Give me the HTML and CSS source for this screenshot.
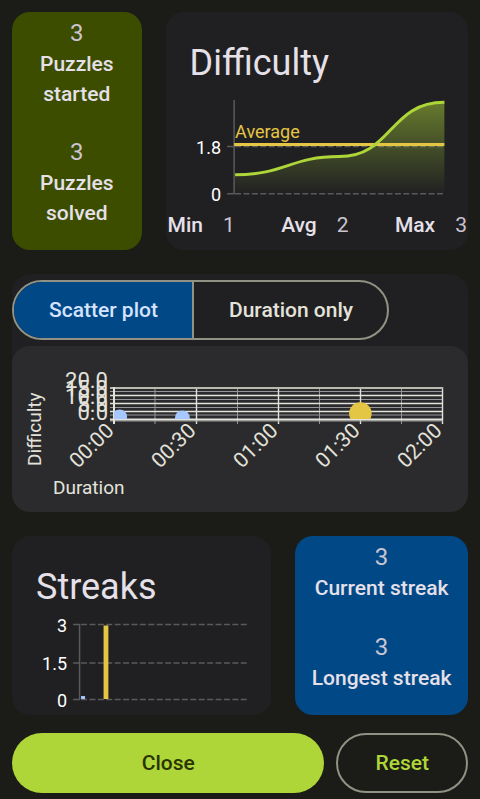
FILE: index.html
```html
<!DOCTYPE html>
<html lang="en">
<head>
<meta charset="utf-8">
<meta name="viewport" content="width=device-width, initial-scale=1">
<title>Statistics</title>
<link rel="stylesheet" href="styles.css">
</head>
<body>
<main class="page">
  <section class="row row-difficulty">
    <div class="tile tile-green">
      <div class="stat"><span class="value">3</span><span class="label">Puzzles started</span></div>
      <div class="stat"><span class="value">3</span><span class="label">Puzzles solved</span></div>
    </div>
    <div class="card">
      <h2 class="title">Difficulty</h2>
      <svg class="chart axis-text" viewBox="0 2 302 118" role="img" aria-label="Difficulty over time">
        <defs>
          <linearGradient id="area" x1="0" y1="14" x2="0" y2="106" gradientUnits="userSpaceOnUse">
            <stop offset="0" stop-color="#aed639" stop-opacity=".5"/>
            <stop offset="1" stop-color="#aed639" stop-opacity="0"/>
          </linearGradient>
        </defs>
        <path class="grid" d="M61 58.500H68M61 105.500H68M68 12V106"/>
        <path class="grid dashed" d="M69 58.500H278M69 105.500H278"/>
        <path fill="url(#area)" d="M69 86.600C119 86.600 124 68.500 173 68.500C226 68.500 223 14.300 278 14.300V106H69Z"/>
        <path class="average" d="M68 56.500H278"/>
        <path class="curve" d="M69 86.600C119 86.600 124 68.500 173 68.500C226 68.500 223 14.300 278 14.300"/>
        <text class="average-text" x="69" y="50">Average</text>
        <text x="55" y="66" text-anchor="end">1.8</text>
        <text x="55" y="113" text-anchor="end">0</text>
      </svg>
      <dl class="summary">
        <div><dt>Min</dt><dd>1</dd></div>
        <div><dt>Avg</dt><dd>2</dd></div>
        <div><dt>Max</dt><dd>3</dd></div>
      </dl>
    </div>
  </section>

  <section class="card plot-card">
    <div class="segments">
      <button type="button" class="segment selected" aria-pressed="true">Scatter plot</button>
      <button type="button" class="segment" aria-pressed="false">Duration only</button>
    </div>
    <div class="plot">
      <svg class="chart scatter" viewBox="0 0 456 166" role="img" aria-label="Scatter plot of difficulty and duration">
        <defs><clipPath id="plot-area"><path d="M102 20H434V73H102Z"/></clipPath></defs>
        <path class="minor" d="M98 45.500H431M98 53.500H431M98 61.500H431M98 69H431M143 41V78M225.500 41V78M307.500 41V78M389.500 41V78"/>
        <path class="major" d="M98 49.500H431M98 57.500H431M98 65.500H431M184.500 41V78M266.500 41V78M348.500 41V78M430.500 41V78"/>
        <path class="border-top" d="M98 42H431"/>
        <path class="minor" d="M98 75H431"/>
        <path class="axis" d="M98 73.500H431M102 41V78"/>
        <g clip-path="url(#plot-area)">
          <circle class="dot" cx="107.700" cy="70.800" r="7.400"/>
          <circle class="dot" cx="170.400" cy="71.800" r="7.400"/>
          <circle class="dot-best" cx="348.400" cy="67.600" r="11.300"/>
        </g>
        <g class="y-ticks" text-anchor="end">
          <text x="96" y="42">20.0</text>
          <text x="96" y="50">15.0</text>
          <text x="96" y="58">10.0</text>
          <text x="96" y="66">5.0</text>
          <text x="96" y="74">0.0</text>
        </g>
        <g text-anchor="end">
          <text transform="translate(103 86) rotate(-45)">00:00</text>
          <text transform="translate(185 86) rotate(-45)">00:30</text>
          <text transform="translate(267 86) rotate(-45)">01:00</text>
          <text transform="translate(349 86) rotate(-45)">01:30</text>
          <text transform="translate(431 86) rotate(-45)">02:00</text>
        </g>
        <text class="axis-name" transform="translate(29 120) rotate(-90)">Difficulty</text>
        <text class="axis-name" x="41" y="148">Duration</text>
      </svg>
    </div>
  </section>

  <section class="row row-streaks">
    <div class="card">
      <h2 class="title">Streaks</h2>
      <svg class="chart axis-text" viewBox="0 2 259 101" role="img" aria-label="Streak lengths">
        <path class="grid" d="M61 12.500H68M61 51H68M61 87.500H68M67.500 12V88"/>
        <path class="grid dashed" d="M69 12.500H235M69 51H235M69 87.500H235"/>
        <path class="dot" d="M69 84H73V87H69Z"/>
        <path class="dot-best" d="M91.500 13.500H96.300V87H91.500Z"/>
        <text x="55" y="20" text-anchor="end">3</text>
        <text x="55" y="58" text-anchor="end">1.5</text>
        <text x="55" y="95" text-anchor="end">0</text>
      </svg>
    </div>
    <div class="tile tile-blue">
      <div class="stat"><span class="value">3</span><span class="label">Current streak</span></div>
      <div class="stat"><span class="value">3</span><span class="label">Longest streak</span></div>
    </div>
  </section>

  <footer class="actions">
    <button type="button" class="action close">Close</button>
    <button type="button" class="action reset">Reset</button>
  </footer>
</main>
</body>
</html>
```
FILE: styles.css
```css
* {
  box-sizing: border-box;
}

body {
  margin: 0;
  background: #1b1c17;
  color: #e6e0e9;
  font-family: Roboto, "Liberation Sans", sans-serif;
}

.page {
  padding: 12px 12px 6px;
}

.row {
  display: grid;
  gap: 24px;
}

.row-difficulty {
  grid-template-columns: 3fr 7fr;
}

.row-streaks {
  grid-template-columns: 3fr 2fr;
}

.card,
.tile {
  min-width: 0;
  border-radius: 18px;
}

.card {
  background: #202022;
}

.row .card {
  padding-top: 24px;
}

.tile {
  display: flex;
  flex-direction: column;
}

.tile-green {
  background: #3c4d00;
}

.tile-blue {
  background: #004886;
}

.stat {
  flex: 1;
  display: flex;
  flex-direction: column;
  gap: 1px;
  padding: 6px 12px 0;
  line-height: 30px;
  text-align: center;
}

.value {
  color: #cac4d0;
  font-size: 24px;
}

.label {
  font-size: 21px;
  font-weight: 500;
}

.title {
  margin: 0;
  padding-left: 24px;
  font-size: 36px;
  font-weight: 400;
  line-height: 54px;
}

.chart {
  display: block;
  width: 100%;
}

.axis-text {
  fill: #ffffff;
  font-size: 18px;
}

.grid {
  fill: none;
  stroke: #5a5a5d;
  stroke-width: 1.5;
}

.dashed {
  stroke-dasharray: 6 2.4;
}

.curve {
  fill: none;
  stroke: #aed639;
  stroke-width: 3;
}

.average {
  stroke: #e5c544;
  stroke-width: 3;
}

.average-text,
.dot-best {
  fill: #e5c544;
}

.dot {
  fill: #a6c8ff;
}

.summary {
  display: flex;
  justify-content: space-between;
  margin: 0;
  padding: 0 1px 8px 2px;
  line-height: 34px;
}

.summary div {
  display: flex;
  gap: 20px;
}

.summary dt {
  font-size: 21px;
  font-weight: 500;
}

.summary dd {
  margin: 0;
  color: #cac4d0;
  font-size: 21px;
}

.plot-card {
  margin: 24px 0;
  padding-top: 6px;
}

.segments {
  display: flex;
  width: fit-content;
  margin-bottom: 6px;
  overflow: hidden;
  border: 2px solid #919283;
  border-radius: 30px;
}

.segment {
  height: 56px;
  padding: 0 34px 0 35px;
  border: 0;
  background: none;
  color: #e4e3db;
  font: 500 21px Roboto, "Liberation Sans", sans-serif;
}

.segment + .segment {
  border-left: 2px solid #919283;
}

.selected {
  background: #004886;
  color: #d5e3ff;
}

.plot {
  border-radius: 18px;
  background: #2b2b2d;
}

.scatter {
  fill: #e4e3db;
  font-size: 21px;
}

.y-ticks {
  font-size: 22px;
}

.axis-name {
  font-size: 19px;
}

.minor {
  stroke: #97979a;
  stroke-width: 1;
}

.major {
  stroke: #e4e3db;
  stroke-width: 1.4;
}

.border-top {
  stroke: #b9b9b0;
  stroke-width: 2;
}

.axis {
  stroke: #e4e3db;
  stroke-width: 2;
}

.row-streaks {
  margin-bottom: 18px;
}

.actions {
  display: flex;
  gap: 12px;
}

.action {
  height: 60px;
  border: 0;
  border-radius: 30px;
  font: 500 21px Roboto, "Liberation Sans", sans-serif;
}

.close {
  flex: 1;
  background: #aed639;
  color: #293500;
}

.reset {
  padding: 0 37px;
  border: 2px solid #919283;
  background: none;
  color: #aed639;
}
```
